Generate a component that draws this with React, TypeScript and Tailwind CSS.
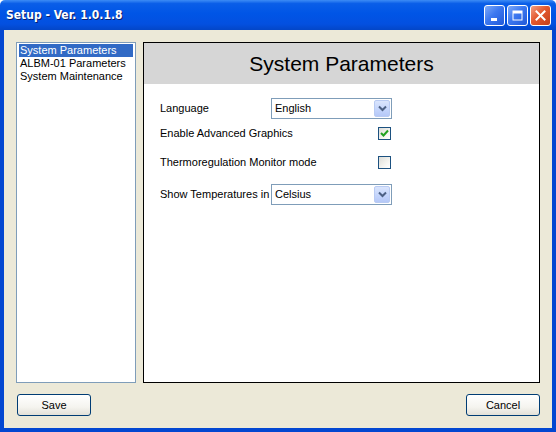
import React from "react";

function TitleButton({ kind }: { kind: "min" | "max" | "close" }) {
  const base =
    "w-[21px] h-[21px] rounded-[3px] border border-white flex items-center justify-center";
  if (kind === "close") {
    return (
      <div className={`${base} bg-[linear-gradient(135deg,#f39f83_0%,#e3582f_45%,#c4401b_100%)]`}>
        <svg width="13" height="13" viewBox="0 0 13 13">
          <path d="M2.5 2.5 L10.5 10.5 M10.5 2.5 L2.5 10.5" stroke="white" strokeWidth="2" strokeLinecap="square" />
        </svg>
      </div>
    );
  }
  return (
    <div className={`${base} bg-[linear-gradient(135deg,#7eaaf8_0%,#3c78f0_45%,#2159d8_100%)]`}>
      {kind === "min" ? (
        <svg width="13" height="13" viewBox="0 0 13 13">
          <rect x="3" y="9" width="6" height="3" fill="white" />
        </svg>
      ) : (
        <svg width="13" height="13" viewBox="0 0 13 13">
          <rect x="2" y="2" width="9" height="9" fill="none" stroke="white" strokeWidth="1" />
          <rect x="2" y="2" width="9" height="2.5" fill="white" />
        </svg>
      )}
    </div>
  );
}

function Dropdown({ value }: { value: string }) {
  return (
    <div className="w-[121px] h-[21px] border border-[#7f9db9] bg-white flex items-center">
      <div className="flex-1 pl-[3px] text-[11px] text-black leading-none">{value}</div>
      <div className="w-[16px] h-[17px] mr-[1px] rounded-[2px] border border-[#b9cbf3] bg-[linear-gradient(180deg,#dae5fd_0%,#c3d4fc_60%,#b5c8f7_100%)] flex items-center justify-center">
        <svg width="9" height="7" viewBox="0 0 9 7">
          <path d="M1 1.5 L4.5 5 L8 1.5" fill="none" stroke="#4d6185" strokeWidth="2" />
        </svg>
      </div>
    </div>
  );
}

function Checkbox({ checked }: { checked: boolean }) {
  return (
    <div className="w-[13px] h-[13px] border border-[#1c5180] bg-[linear-gradient(135deg,#dcdcd7_0%,#f4f4f0_60%,#ffffff_100%)] flex items-center justify-center">
      {checked && (
        <svg width="9" height="9" viewBox="0 0 9 9">
          <path d="M1 4 L3.5 6.5 L8 1.5" fill="none" stroke="#21a121" strokeWidth="2" />
        </svg>
      )}
    </div>
  );
}

function XPButton({ label }: { label: string }) {
  return (
    <div className="w-[74px] h-[22px] rounded-[3px] border border-[#003c74] bg-[linear-gradient(180deg,#ffffff_0%,#f5f4ef_60%,#e3e1d8_100%)] flex items-center justify-center text-[11px] text-black">
      {label}
    </div>
  );
}

export default function App() {
  return (
    <div
      className="w-[556px] h-[432px] flex flex-col overflow-hidden"
      style={{ fontFamily: '"Liberation Sans", Arial, sans-serif' }}
    >
      {/* Title bar */}
      <div className="h-[30px] flex items-center pl-[6px] pr-[5px] rounded-t-[5px] bg-[linear-gradient(180deg,#3d8cf5_0%,#0a5ee8_12%,#0055e6_45%,#0350e0_80%,#0346c7_100%)]">
        <div
          className="flex-1 text-white font-bold text-[12px] [text-shadow:1px_1px_0_#0a1e6b]"
          style={{ fontFamily: '"DejaVu Sans Condensed", "DejaVu Sans", sans-serif' }}
        >
          Setup - Ver. 1.0.1.8
        </div>
        <div className="flex gap-[2px] mt-[1px]">
          <TitleButton kind="min" />
          <TitleButton kind="max" />
          <TitleButton kind="close" />
        </div>
      </div>

      {/* Client area */}
      <div className="flex-1 flex flex-col bg-[#ece9d8] border-x-4 border-b-4 border-[#0347d1] pt-[12px] px-[12px] pb-[11px]">
        <div className="flex gap-[7px] h-[341px]">
          {/* List box */}
          <div className="w-[120px] h-full border border-[#7f9db9] bg-white pt-[1px] px-[2px] text-[11px] leading-[13px] text-black">
            <div className="bg-[#316ac5] text-white pl-[1px]">System Parameters</div>
            <div className="pl-[1px]">ALBM-01 Parameters</div>
            <div className="pl-[1px]">System Maintenance</div>
          </div>

          {/* Panel */}
          <div className="flex-1 h-full border border-black bg-white flex flex-col">
            <div className="h-[41px] bg-[#d6d6d6] flex items-center justify-center text-[21px] text-black">
              System Parameters
            </div>
            <div className="pl-[16px] pt-[14px] text-[11px] text-black flex flex-col">
              <div className="flex items-center h-[21px]">
                <div className="w-[111px]">Language</div>
                <Dropdown value="English" />
              </div>
              <div className="flex items-center h-[13px] mt-[8px]">
                <div className="w-[218px]">Enable Advanced Graphics</div>
                <Checkbox checked />
              </div>
              <div className="flex items-center h-[13px] mt-[16px]">
                <div className="w-[218px]">Thermoregulation Monitor mode</div>
                <Checkbox checked={false} />
              </div>
              <div className="flex items-center h-[21px] mt-[15px]">
                <div className="w-[111px]">Show Temperatures in</div>
                <Dropdown value="Celsius" />
              </div>
            </div>
          </div>
        </div>

        {/* Buttons */}
        <div className="flex justify-between mt-[11px] pl-[1px]">
          <XPButton label="Save" />
          <XPButton label="Cancel" />
        </div>
      </div>
    </div>
  );
}
